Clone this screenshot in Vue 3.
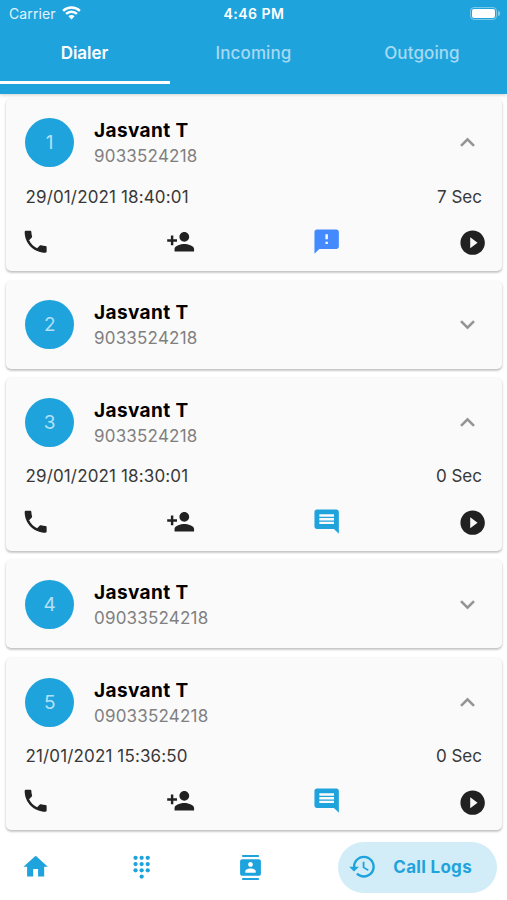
<template>
  <div class="app">
    <header class="top-bar">
      <div class="status-bar">
        <div class="carrier">
          <span>Carrier</span>
          <svg class="wifi" viewBox="0 0 20 15">
            <path d="M1 5.2A13 13 0 0 1 19 5.2" />
            <path d="M4.2 8.5A8.4 8.4 0 0 1 15.8 8.5" />
            <path class="dot" d="M10 14.4L6.7 11A4.7 4.7 0 0 1 13.3 11Z" />
          </svg>
        </div>
        <span class="time">4:46 PM</span>
        <div class="battery-wrap">
          <div class="battery"><div class="level"></div></div>
          <div class="cap"></div>
        </div>
      </div>
      <nav class="tabs">
        <button
          v-for="tab in tabs"
          :key="tab"
          class="tab"
          :class="{ active: tab === activeTab }"
          @click="activeTab = tab"
        >
          <span>{{ tab }}</span>
        </button>
      </nav>
    </header>

    <main class="list">
      <article v-for="call in calls" :key="call.id" class="card">
        <div class="card-header" @click="call.open = !call.open">
          <div class="avatar">{{ call.id }}</div>
          <div class="person">
            <div class="name">{{ call.name }}</div>
            <div class="phone">{{ call.phone }}</div>
          </div>
          <svg class="chevron" viewBox="0 0 24 24">
            <path :d="call.open ? icons.less : icons.more" />
          </svg>
        </div>
        <template v-if="call.open">
          <div class="details">
            <span class="date">{{ call.date }}</span>
            <span class="duration">{{ call.duration }} Sec</span>
          </div>
          <div class="actions">
            <svg viewBox="0 0 24 24"><path :d="icons.call" /></svg>
            <svg viewBox="0 0 24 24"><path :d="icons.personAdd" /></svg>
            <svg viewBox="0 0 24 24" :class="call.note">
              <path :d="icons[call.note]" />
            </svg>
            <svg class="play" viewBox="0 0 24 24"><path :d="icons.play" /></svg>
          </div>
        </template>
      </article>
    </main>

    <footer class="bottom-nav">
      <svg class="home" viewBox="0 0 24 24"><path :d="icons.home" /></svg>
      <svg class="dialpad" viewBox="0 0 24 24">
        <circle v-for="(dot, i) in dots" :key="i" :cx="dot[0]" :cy="dot[1]" r="1.75" />
      </svg>
      <svg class="contacts" viewBox="0 0 24 24"><path :d="icons.contacts" /></svg>
      <button class="logs">
        <svg viewBox="0 0 24 24"><path :d="icons.history" /></svg>
        <span>Call Logs</span>
      </button>
    </footer>
  </div>
</template>

<script setup>
import { ref } from 'vue';

const tabs = ['Dialer', 'Incoming', 'Outgoing'];
const activeTab = ref('Dialer');

const calls = ref([
  { id: 1, name: 'Jasvant T', phone: '9033524218', open: true, date: '29/01/2021 18:40:01', duration: 7, note: 'feedback' },
  { id: 2, name: 'Jasvant T', phone: '9033524218', open: false, date: '', duration: 0, note: 'comment' },
  { id: 3, name: 'Jasvant T', phone: '9033524218', open: true, date: '29/01/2021 18:30:01', duration: 0, note: 'comment' },
  { id: 4, name: 'Jasvant T', phone: '09033524218', open: false, date: '', duration: 0, note: 'comment' },
  { id: 5, name: 'Jasvant T', phone: '09033524218', open: true, date: '21/01/2021 15:36:50', duration: 0, note: 'comment' }
]);

const dots = [
  [7, 4.8], [12, 4.8], [17, 4.8],
  [7, 9.9], [12, 9.9], [17, 9.9],
  [7, 15], [12, 15], [17, 15],
  [12, 20.1]
];

const icons = {
  less: 'M12 8l-6 6 1.41 1.41L12 10.83l4.59 4.58L18 14z',
  more: 'M16.59 8.59L12 13.17 7.41 8.59 6 10l6 6 6-6z',
  call: 'M6.62 10.79c1.44 2.83 3.76 5.14 6.59 6.59l2.2-2.2c.27-.27.67-.36 1.02-.24 1.12.37 2.33.57 3.57.57.55 0 1 .45 1 1V20c0 .55-.45 1-1 1-9.39 0-17-7.61-17-17 0-.55.45-1 1-1h3.5c.55 0 1 .45 1 1 0 1.25.2 2.45.57 3.57.11.35.03.74-.25 1.02l-2.2 2.2z',
  personAdd: 'M15 12c2.21 0 4-1.79 4-4s-1.79-4-4-4-4 1.79-4 4 1.79 4 4 4zm-9-2V7H4v3H1v2h3v3h2v-3h3v-2H6zm9 4c-2.67 0-8 1.34-8 4v2h16v-2c0-2.66-5.33-4-8-4z',
  feedback: 'M20 2H4c-1.1 0-1.99.9-1.99 2L2 22l4-4h14c1.1 0 2-.9 2-2V4c0-1.1-.9-2-2-2zm-7 12h-2v-2h2v2zm0-4h-2V6h2v4z',
  comment: 'M21.99 4c0-1.1-.89-2-1.99-2H4c-1.1 0-2 .9-2 2v12c0 1.1.9 2 2 2h14l4 4-.01-18zM18 14H6v-2h12v2zm0-3H6V9h12v2zm0-3H6V6h12v2z',
  play: 'M12 2C6.48 2 2 6.48 2 12s4.48 10 10 10 10-4.48 10-10S17.52 2 12 2zm-2 14.5v-9l6 4.5-6 4.5z',
  home: 'M10 20v-6h4v6h5v-8h3L12 3 2 12h3v8z',
  contacts: 'M20 0H4v2h16V0zM4 24h16v-2H4v2zM20 4H4c-1.1 0-2 .9-2 2v12c0 1.1.9 2 2 2h16c1.1 0 2-.9 2-2V6c0-1.1-.9-2-2-2zm-8 2.75c1.24 0 2.25 1.01 2.25 2.25s-1.01 2.25-2.25 2.25S9.75 10.24 9.75 9 10.76 6.75 12 6.75zM17 17H7v-1.5c0-1.67 3.33-2.5 5-2.5s5 .83 5 2.5V17z',
  history: 'M13 3c-4.97 0-9 4.03-9 9H1l3.89 3.89.07.14L9 12H6c0-3.87 3.13-7 7-7s7 3.13 7 7-3.13 7-7 7c-1.93 0-3.68-.79-4.94-2.06l-1.42 1.42C8.27 19.99 10.51 21 13 21c4.97 0 9-4.03 9-9s-4.03-9-9-9zm-1 5v5l4.28 2.54.72-1.21-3.5-2.08V8H12z'
};
</script>

<style>
body {
  margin: 0;
  background: #fff;
}
</style>

<style scoped>
.app {
  display: flex;
  flex-direction: column;
  height: 900px;
  overflow: hidden;
  background: #fff;
  font-family: Inter, Roboto, sans-serif;
}

svg {
  display: block;
  flex: none;
  fill: currentColor;
}

button {
  padding: 0;
  border: none;
  background: none;
  font: inherit;
}

.top-bar {
  flex: none;
  height: 94px;
  background: #1fa3dd;
  color: #fff;
  box-shadow: 0 1px 4px rgba(0, 0, 0, 0.2);
  z-index: 1;
}

.status-bar {
  display: grid;
  grid-template-columns: 1fr auto 1fr;
  align-items: center;
  height: 27px;
  padding: 0 7px 0 9px;
}

.carrier {
  display: flex;
  align-items: center;
  gap: 6px;
  font-size: 14px;
  letter-spacing: 0.1px;
  color: #e2f4fc;
}

.wifi {
  width: 19px;
  height: 14px;
  margin-top: -1px;
  fill: none;
  stroke: #fff;
  stroke-width: 2.6;

  .dot {
    fill: #fff;
    stroke: none;
  }
}

.time {
  margin-right: 1px;
  font-size: 14px;
  font-weight: 600;
  letter-spacing: 0.5px;
}

.battery-wrap {
  display: flex;
  align-items: center;
  justify-self: end;
  gap: 1px;
}

.battery {
  box-sizing: border-box;
  width: 27px;
  height: 13px;
  padding: 1px;
  border: 1px solid rgba(255, 255, 255, 0.4);
  border-radius: 4px;
}

.level {
  height: 100%;
  border-radius: 2px;
  background: #fff;
}

.cap {
  width: 2px;
  height: 5px;
  border-radius: 0 2px 2px 0;
  background: rgba(255, 255, 255, 0.45);
}

.tabs {
  display: grid;
  grid-template-columns: 170px 1fr 169px;
  height: 57px;
}

.tab {
  box-sizing: border-box;
  padding: 0 1px 2px 0;
  border-bottom: 3px solid transparent;
  color: #a5daf2;
  font-size: 17px;
  font-weight: 500;
  letter-spacing: 0.1px;

  &.active {
    border-color: #fff;
    color: #fff;
    font-weight: 600;
    letter-spacing: 0;
  }
}

.list {
  display: flex;
  flex: 1;
  flex-direction: column;
  gap: 9.8px;
  min-height: 0;
  padding: 4.7px 5px 0 6px;
}

.card {
  flex: none;
  border-radius: 5px;
  background: #fafafa;
  box-shadow: 0 1px 3px rgba(0, 0, 0, 0.18), 0 2px 2px rgba(0, 0, 0, 0.12);
}

.card-header {
  display: flex;
  align-items: center;
  height: 88px;
  padding: 0 20px 0 19.2px;
}

.avatar {
  display: grid;
  place-items: center;
  width: 49px;
  height: 49px;
  border-radius: 50%;
  background: #1fa3dd;
  color: #b4e0f5;
  font-size: 19px;
}

.person {
  flex: 1;
  margin-left: 19.8px;
  padding-top: 0.8px;
}

.name {
  color: #000;
  font-size: 19px;
  font-weight: 700;
  line-height: 26px;
  letter-spacing: 0.4px;
}

.phone {
  color: #808080;
  font-size: 17px;
  line-height: 24px;
  letter-spacing: 0.2px;
}

.chevron {
  width: 29px;
  height: 29px;
  color: #929292;
  stroke: currentColor;
  stroke-width: 0.2;
}

.details {
  display: flex;
  justify-content: space-between;
  padding: 0 20px 0 19.5px;
  color: #383838;
  font-size: 17px;
  line-height: 20px;
  letter-spacing: 0.14px;
}

.duration {
  letter-spacing: 0;
}

.actions {
  display: flex;
  justify-content: space-between;
  height: 44px;
  padding: 20.2px 14.5px 0;
  color: #212121;

  svg {
    width: 29.3px;
    height: 29.3px;
  }

  .feedback {
    color: #448aff;
  }

  .comment {
    color: #1fa3dd;
  }

  .play {
    margin-top: 1.3px;
  }
}

.bottom-nav {
  display: flex;
  flex: none;
  align-items: center;
  box-sizing: border-box;
  height: 66px;
  padding: 0 10px 0 20.5px;
  background: #fff;
  color: #1fa3dd;
  z-index: 1;
}

.home,
.dialpad {
  width: 29.3px;
  height: 29.3px;
}

.dialpad {
  margin-left: 77.5px;
}

.contacts {
  width: 25px;
  height: 25px;
  margin-left: 81.7px;
}

.logs {
  display: flex;
  align-items: center;
  gap: 16px;
  width: 159px;
  height: 51px;
  margin-left: auto;
  padding-left: 10px;
  border-radius: 26px;
  background: #d2edf8;
  color: #1fa3dd;
  font-size: 17px;
  font-weight: 700;
  letter-spacing: 0.3px;

  svg {
    width: 29.3px;
    height: 29.3px;
  }
}
</style>
